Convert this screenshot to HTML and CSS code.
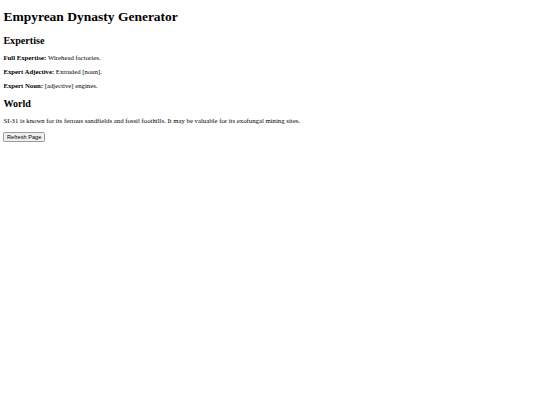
FILE: index.html
```html
<!DOCTYPE html>
<html>
<head>
<meta charset="utf-8">
<title>Empyrean Dynasty Generator</title>
<link rel="stylesheet" href="styles.css">
</head>
<body class="page">
<h1 class="title">Empyrean Dynasty Generator</h1>
<h2 class="section">Expertise</h2>
<p class="line"><b>Full Expertise:</b> Wirehead factories.</p>
<p class="line"><b>Expert Adjective:</b> Extruded [noun].</p>
<p class="line"><b>Expert Noun:</b> [adjective] engines.</p>
<h2 class="section">World</h2>
<p class="line">SI-31 is known for its ferrous sandfields and fossil foothills. It may be valuable for its exofungal mining sites.</p>
<button class="refresh">Refresh Page</button>
</body>
</html>
```
FILE: styles.css
```css
html { background: #fff; }
.page {
  margin: 3.375px;
  font-family: "Liberation Serif", "Times New Roman", serif;
  font-size: 6.75px;
  color: #000;
}
.title {
  font-size: 13.5px;
  font-weight: bold;
  margin: 6px 0 9.05px;
}
.section {
  font-size: 10.125px;
  font-weight: bold;
  margin: 9.3px 0 8.4px;
}
.line {
  margin: 6.75px 0;
}
.refresh {
  display: block;
  font-family: "Liberation Sans", Arial, sans-serif;
  font-size: 5.625px;
  line-height: 6.5px;
  padding: 1px 2.6px;
  margin: 7.5px 0 0;
  border: 0.8px solid #9a9a9a;
  border-radius: 1.3px;
  background: #efefef;
  color: #000;
}
```
